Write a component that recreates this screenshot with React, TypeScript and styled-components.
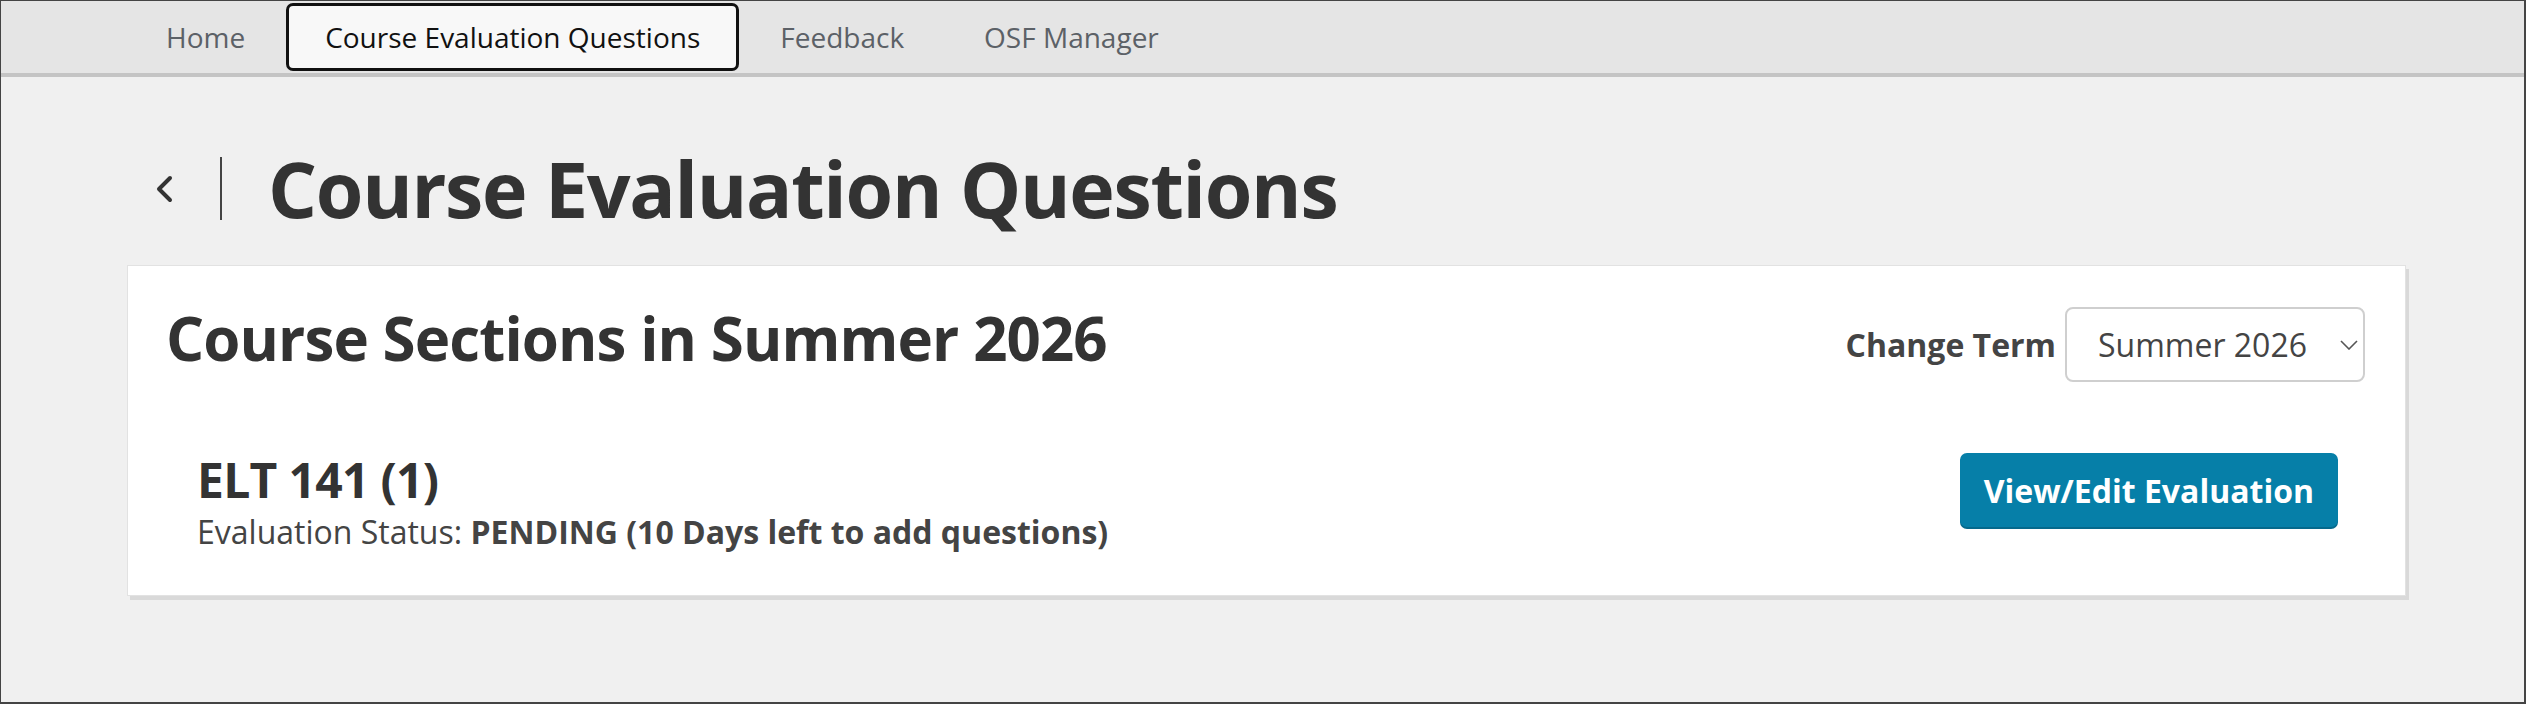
import styled, { createGlobalStyle } from 'styled-components';

const GlobalStyle = createGlobalStyle`
	html,
	body {
		margin: 0;
		padding: 0;
		background: #f0f0f0;
	}
	* {
		box-sizing: border-box;
	}
`;

const TABS = [
	{ id: 'home', label: 'Home' },
	{ id: 'questions', label: 'Course Evaluation Questions' },
	{ id: 'feedback', label: 'Feedback' },
	{ id: 'osf', label: 'OSF Manager' },
];

const ACTIVE_TAB = 'questions';

const App = () => {
	return (
		<>
			<GlobalStyle />
			<Frame>
				<NavBar>
					<NavList>
						{TABS.map(({ id, label }) => (
							<NavTab key={id} $active={id === ACTIVE_TAB}>
								{label}
							</NavTab>
						))}
					</NavList>
				</NavBar>

				<Main>
					<PageHeader>
						<BackButton aria-label="Back">
							<svg width="18" height="28" viewBox="0 0 18 28" fill="none">
								<polyline
									points="15,3 4,14 15,25"
									stroke="#333"
									strokeWidth="4"
									strokeLinecap="round"
									strokeLinejoin="round"
								/>
							</svg>
						</BackButton>
						<HeaderDivider />
						<PageTitle>Course Evaluation Questions</PageTitle>
					</PageHeader>

					<Card>
						<CardHeader>
							<SectionTitle>Course Sections in Summer 2026</SectionTitle>
							<TermControl>
								<TermLabel>Change Term</TermLabel>
								<SelectWrap>
									<TermSelect defaultValue="summer-2026">
										<option value="summer-2026">Summer 2026</option>
										<option value="spring-2026">Spring 2026</option>
										<option value="fall-2025">Fall 2025</option>
									</TermSelect>
									<SelectChevron width="18" height="10" viewBox="0 0 18 10" fill="none">
										<polyline points="1,1 9,9 17,1" stroke="#555" strokeWidth="1.6" />
									</SelectChevron>
								</SelectWrap>
							</TermControl>
						</CardHeader>

						<SectionRow>
							<SectionInfo>
								<SectionName>ELT 141 (1)</SectionName>
								<SectionStatus>
									Evaluation Status: <strong>PENDING (10 Days left to add questions)</strong>
								</SectionStatus>
							</SectionInfo>
							<PrimaryButton>View/Edit Evaluation</PrimaryButton>
						</SectionRow>
					</Card>
				</Main>
			</Frame>
		</>
	);
};
export default App;

const Frame = styled.div`
	height: 704px;
	border: 1px solid #444;
	border-right-width: 2px;
	border-bottom-width: 2px;
	background: #f0f0f0;
	font-family: 'Open Sans', 'Noto Sans', sans-serif;
	overflow: hidden;
`;

const NavBar = styled.nav`
	height: 76px;
	background: #e5e5e5;
	border-bottom: 4px solid #c4c4c4;
`;

const NavList = styled.div`
	display: flex;
	align-items: center;
	gap: 2px;
	height: 72px;
	padding-left: 126px;
`;

const NavTab = styled.div<{ $active?: boolean }>`
	display: flex;
	align-items: center;
	height: 68px;
	padding: 0 36px;
	border: 3px solid ${({ $active }) => ($active ? '#111' : 'transparent')};
	border-radius: 7px;
	background: ${({ $active }) => ($active ? '#f8f8f8' : 'transparent')};
	color: ${({ $active }) => ($active ? '#111' : '#5c6167')};
	font-size: 28px;
	white-space: nowrap;
`;

const Main = styled.main`
	padding: 0 118px 0 126px;
`;

const PageHeader = styled.div`
	display: flex;
	align-items: center;
	margin-top: 64px;
	height: 95px;
`;

const BackButton = styled.button`
	display: flex;
	align-items: center;
	padding: 0;
	margin-left: 28px;
	border: none;
	background: none;
	cursor: pointer;
`;

const HeaderDivider = styled.span`
	width: 2px;
	height: 63px;
	margin-left: 47px;
	background: #444;
`;

const PageTitle = styled.h1`
	margin: 0 0 0 46px;
	font-size: 77px;
	line-height: 95px;
	font-weight: 700;
	letter-spacing: -1.3px;
	color: #333;
	white-space: nowrap;
`;

const Card = styled.section`
	margin-top: 29px;
	padding: 34px 40px 42px 38px;
	background: #fff;
	border: 1px solid #e2e2e2;
	box-shadow: 3px 4px 0 #d9d9d9;
`;

const CardHeader = styled.div`
	display: flex;
	justify-content: space-between;
	align-items: flex-start;
`;

const SectionTitle = styled.h2`
	margin: 0;
	font-size: 60px;
	line-height: 77px;
	font-weight: 700;
	letter-spacing: -0.9px;
	color: #333;
	white-space: nowrap;
`;

const TermControl = styled.div`
	display: flex;
	align-items: center;
	gap: 9px;
	margin-top: 7px;
`;

const TermLabel = styled.label`
	font-size: 32px;
	font-weight: 700;
	color: #444;
`;

const SelectWrap = styled.div`
	position: relative;
	width: 300px;
	height: 75px;
`;

const TermSelect = styled.select`
	appearance: none;
	width: 100%;
	height: 100%;
	padding: 0 40px 0 31px;
	border: 2px solid #cfcfcf;
	border-radius: 8px;
	background: #fff;
	font-family: 'Open Sans', 'Noto Sans', sans-serif;
	font-size: 32px;
	color: #444;
	outline: none;
`;

const SelectChevron = styled.svg`
	position: absolute;
	right: 7px;
	top: 33px;
	pointer-events: none;
`;

const SectionRow = styled.div`
	display: flex;
	justify-content: space-between;
	align-items: flex-start;
	margin-top: 69px;
	padding: 0 27px 0 31px;
`;

const SectionInfo = styled.div`
	display: flex;
	flex-direction: column;
	gap: 2px;
`;

const SectionName = styled.h3`
	margin: 0;
	font-size: 48px;
	line-height: 58px;
	font-weight: 700;
	letter-spacing: -0.7px;
	color: #333;
`;

const SectionStatus = styled.p`
	margin: 0;
	font-size: 32px;
	line-height: 42px;
	color: #444;

	strong {
		font-weight: 700;
	}
`;

const PrimaryButton = styled.button`
	margin-top: 2px;
	height: 74px;
	padding: 0 24px;
	border: none;
	border-radius: 7px;
	background: #067fa8;
	box-shadow: 0 2px 0 #05698c;
	color: #fff;
	font-family: 'Open Sans', 'Noto Sans', sans-serif;
	font-size: 32px;
	font-weight: 700;
	white-space: nowrap;
	cursor: pointer;
`;
